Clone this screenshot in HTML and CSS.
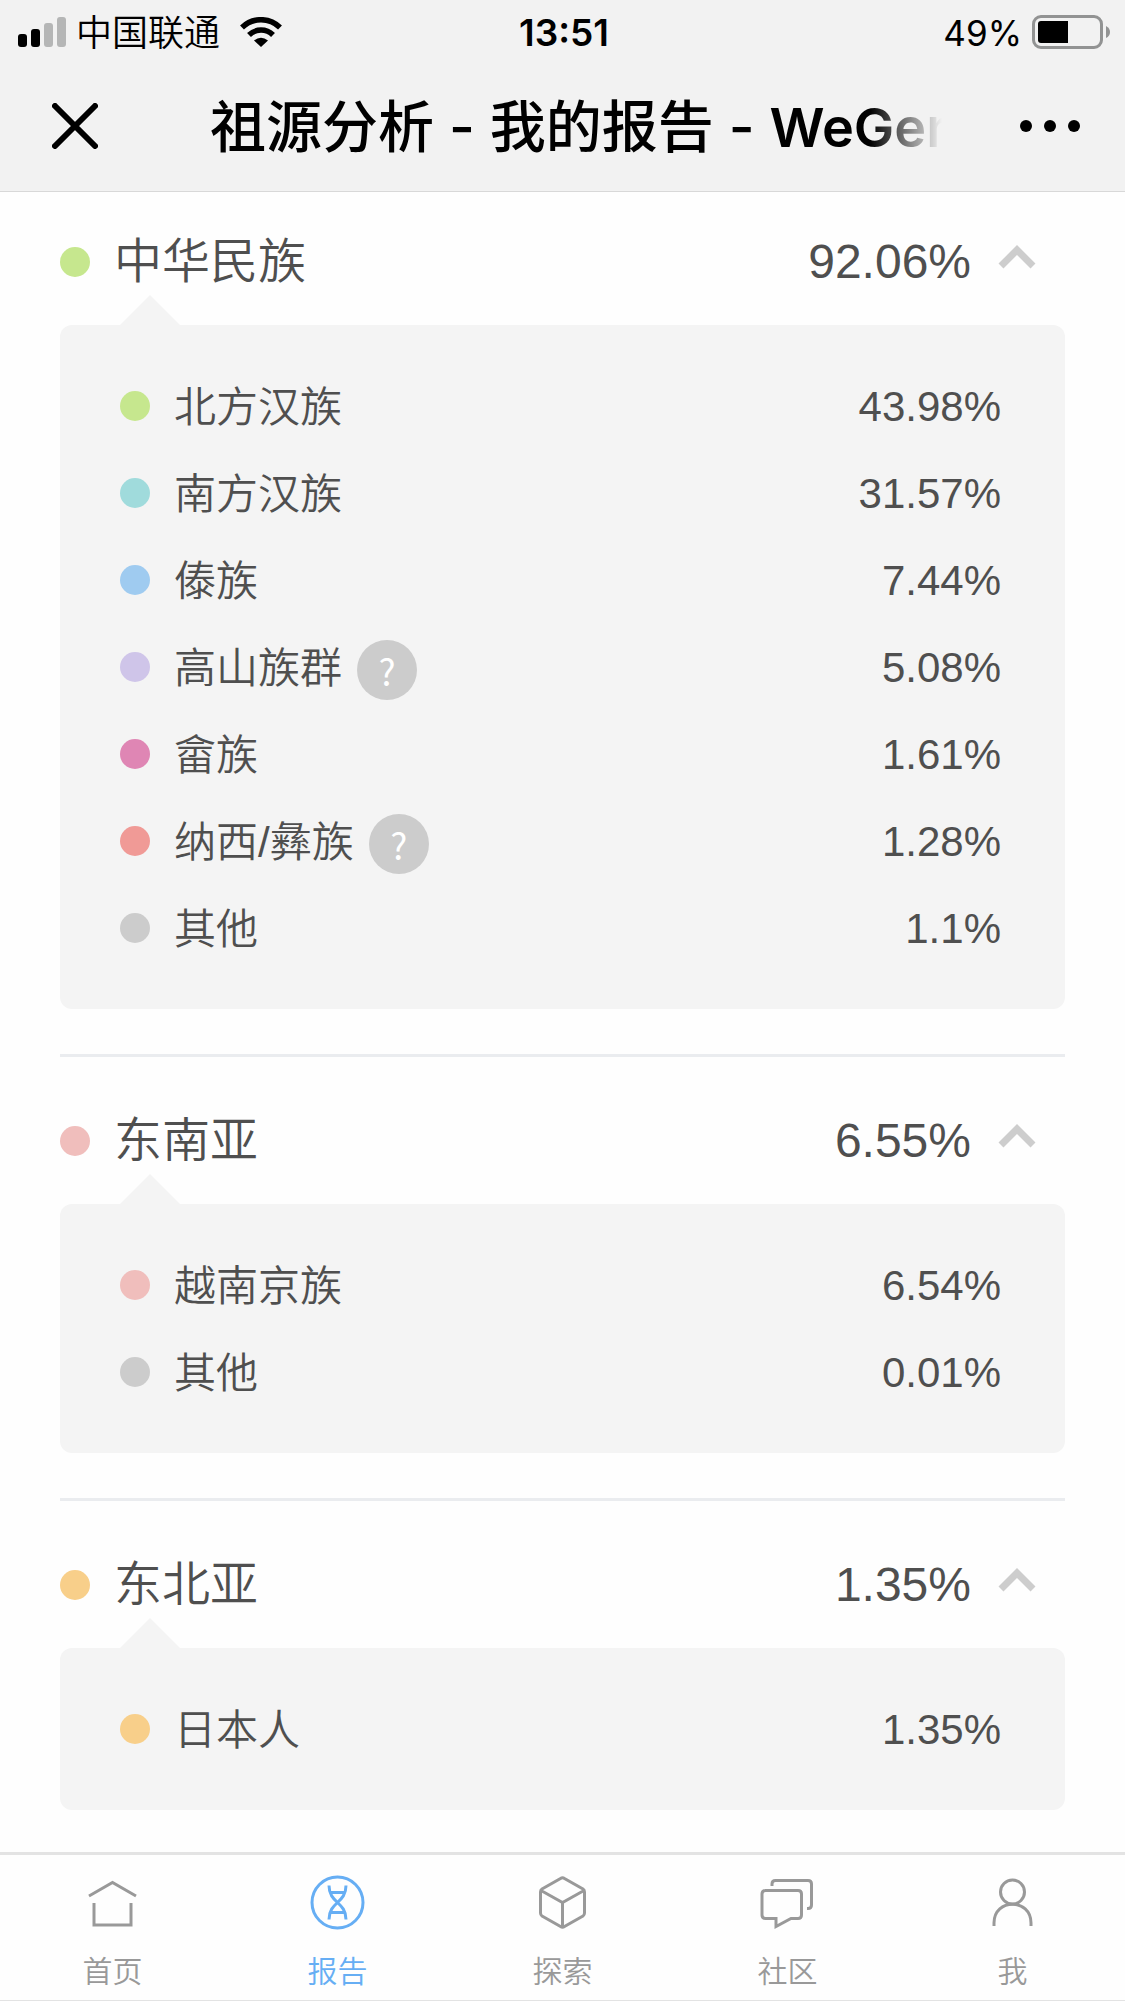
FILE: index.html
```html
<!DOCTYPE html>
<html lang="zh-CN">
<head>
<meta charset="utf-8">
<meta name="viewport" content="width=device-width, initial-scale=1">
<title>祖源分析 - 我的报告 - WeGene</title>
<link rel="stylesheet" href="styles.css">
</head>
<body>
<header class="top">
  <div class="status">
    <div class="status-left">
      <svg class="signal" width="48" height="30" viewBox="0 0 48 30" aria-hidden="true">
        <rect x="0" y="17" width="9" height="13" rx="3"/>
        <rect x="13" y="12" width="9" height="18" rx="3"/>
        <rect class="dim" x="26" y="6" width="9" height="24" rx="3"/>
        <rect class="dim" x="39" y="0" width="9" height="30" rx="3"/>
      </svg>
      <span class="carrier">中国联通</span>
      <svg class="wifi" width="42" height="30" viewBox="0 0 42 30" aria-hidden="true">
        <path d="M2 10.500A27 27 0 0 1 40 10.500M9 18A17 17 0 0 1 33 18" fill="none" stroke="#000" stroke-width="5.500"/>
        <path d="M21 30L14 23.500Q21 18 28 23.500Z"/>
      </svg>
    </div>
    <time class="clock">13:51</time>
    <div class="status-right">
      <span class="charge">49%</span>
      <svg class="battery" width="78" height="34" viewBox="0 0 78 34" aria-hidden="true">
        <rect x="1.500" y="1.500" width="68" height="31" rx="7.500" fill="none" stroke="#929393" stroke-width="3"/>
        <path d="M9 6H36V28H9Q6 28 6 25V9Q6 6 9 6Z"/>
        <path d="M74 11Q78 13 78 17T74 23Z" fill="#929393"/>
      </svg>
    </div>
  </div>
  <div class="nav">
    <button class="icon-btn" type="button" aria-label="关闭">
      <svg width="46" height="46" viewBox="0 0 46 46"><path d="M3 3L43 43M43 3L3 43" stroke="#000" stroke-width="6" stroke-linecap="round"/></svg>
    </button>
    <h1 class="title">祖源分析 - 我的报告 - <span class="brand">WeGene</span></h1>
    <button class="icon-btn" type="button" aria-label="更多">
      <svg width="60" height="12" viewBox="0 0 60 12"><circle cx="6" cy="6" r="6"/><circle cx="30" cy="6" r="6"/><circle cx="54" cy="6" r="6"/></svg>
    </button>
  </div>
</header>

<main class="report">
  <section class="group">
    <button class="group-head" type="button" aria-expanded="true">
      <span class="dot green"></span><span class="name">中华民族</span><span class="value">92.06%</span>
      <svg class="chevron" width="38" height="24" viewBox="0 0 38 24"><path d="M3 21L19 5L35 21"/></svg>
    </button>
    <ul class="card">
      <li class="row"><span class="dot green"></span><span class="name">北方汉族</span><span class="value">43.98%</span></li>
      <li class="row"><span class="dot teal"></span><span class="name">南方汉族</span><span class="value">31.57%</span></li>
      <li class="row"><span class="dot blue"></span><span class="name">傣族</span><span class="value">7.44%</span></li>
      <li class="row"><span class="dot lilac"></span><span class="name">高山族群</span><button class="help" type="button" aria-label="高山族群说明">?</button><span class="value">5.08%</span></li>
      <li class="row"><span class="dot pink"></span><span class="name">畲族</span><span class="value">1.61%</span></li>
      <li class="row"><span class="dot coral"></span><span class="name">纳西/彝族</span><button class="help" type="button" aria-label="纳西/彝族说明">?</button><span class="value">1.28%</span></li>
      <li class="row"><span class="dot gray"></span><span class="name">其他</span><span class="value">1.1%</span></li>
    </ul>
  </section>

  <section class="group">
    <button class="group-head" type="button" aria-expanded="true">
      <span class="dot rose"></span><span class="name">东南亚</span><span class="value">6.55%</span>
      <svg class="chevron" width="38" height="24" viewBox="0 0 38 24"><path d="M3 21L19 5L35 21"/></svg>
    </button>
    <ul class="card">
      <li class="row"><span class="dot rose"></span><span class="name">越南京族</span><span class="value">6.54%</span></li>
      <li class="row"><span class="dot gray"></span><span class="name">其他</span><span class="value">0.01%</span></li>
    </ul>
  </section>

  <section class="group">
    <button class="group-head" type="button" aria-expanded="true">
      <span class="dot amber"></span><span class="name">东北亚</span><span class="value">1.35%</span>
      <svg class="chevron" width="38" height="24" viewBox="0 0 38 24"><path d="M3 21L19 5L35 21"/></svg>
    </button>
    <ul class="card">
      <li class="row"><span class="dot amber"></span><span class="name">日本人</span><span class="value">1.35%</span></li>
    </ul>
  </section>
</main>

<nav class="tabs">
  <a class="tab" href="#home">
    <svg class="tab-icon" width="60" height="60" viewBox="0 0 60 60"><path d="M6 24L29.500 10.500L53 24M11 31V53H48V31"/></svg>
    <span>首页</span>
  </a>
  <a class="tab active" href="#report" aria-current="page">
    <svg class="tab-icon" width="60" height="60" viewBox="0 0 60 60"><circle cx="29.500" cy="30.500" r="25.500"/><path d="M21 13.500C21 31.500 38 29.500 38 47.500M38 13.500C38 31.500 21 29.500 21 47.500M23 20.500H36M23 40.500H36"/></svg>
    <span>报告</span>
  </a>
  <a class="tab" href="#explore">
    <svg class="tab-icon" width="60" height="60" viewBox="0 0 60 60"><path d="M27.500 6.500Q29.500 5 31.500 6.500L50 17Q51.500 18 51.500 20V41Q51.500 43 50 44L31.500 54.500Q29.500 56 27.500 54.500L9 44Q7.500 43 7.500 41V20Q7.500 18 9 17ZM8 18.500L29.500 30.500L51 18.500M29.500 30.500V55"/></svg>
    <span>探索</span>
  </a>
  <a class="tab" href="#community">
    <svg class="tab-icon" width="60" height="60" viewBox="0 0 60 60"><path d="M7 18.500H40Q43.500 18.500 43.500 22V43Q43.500 46.500 40 46.500H33L18 54.500V46.500H7.500Q4 46.500 4 43V22Q4 18.500 7.500 18.500M14 14V12Q14 8.500 17.500 8.500H50Q53.500 8.500 53.500 12V33Q53.500 36.500 50 36.500H49"/></svg>
    <span>社区</span>
  </a>
  <a class="tab" href="#me">
    <svg class="tab-icon" width="60" height="60" viewBox="0 0 60 60"><circle cx="29.500" cy="20" r="12"/><path d="M11 54V51C11 26 48 26 48 51V54"/></svg>
    <span>我</span>
  </a>
</nav>
</body>
</html>
```

FILE: styles.css
```css
* { box-sizing: border-box; }

body {
  margin: 0;
  min-height: 100vh;
  display: flex;
  flex-direction: column;
  background: #fefefe;
  color: #4f4f4f;
  font-family: "Liberation Sans", "Noto Sans CJK SC", sans-serif;
}

button {
  border: 0;
  padding: 0;
  background: none;
  color: inherit;
  font: inherit;
}

/* Status bar and title bar */
.top {
  height: 192px;
  background: #f2f2f2;
  border-bottom: 1px solid #d8d8d8;
  color: #000;
  font-family: Inter, "Noto Sans CJK SC", sans-serif;
}

.status {
  height: 60px;
  padding: 0 15px 0 18px;
  display: grid;
  grid-template-columns: 1fr auto 1fr;
  align-items: center;
  font-size: 36px;
  line-height: 60px;
}

.status-left,
.status-right {
  display: flex;
  align-items: center;
}

.status-right {
  justify-content: flex-end;
  gap: 10px;
}

.dim { fill: #b5b6b6; }

.carrier {
  margin-left: 10px;
  padding-top: 3px;
  font-weight: 350;
}

.wifi { margin-left: 20px; }

.clock {
  padding-top: 2px;
  font-size: 37px;
  font-weight: 600;
}

.charge {
  padding-top: 2px;
  font-size: 35px;
}

.nav {
  height: 131px;
  padding: 0 45px 0 52px;
  display: flex;
  align-items: center;
}

.icon-btn {
  display: flex;
  flex: none;
}

.title {
  flex: 1;
  margin: 0 78px 0 112px;
  padding-top: 3px;
  overflow: hidden;
  white-space: nowrap;
  font-size: 56px;
  line-height: 80px;
  font-weight: 500;
  -webkit-mask-image: linear-gradient(to right, #000 calc(100% - 72px), transparent);
  mask-image: linear-gradient(to right, #000 calc(100% - 72px), transparent);
}

.brand {
  font-size: 54px;
  font-weight: 600;
}

/* Report groups */
.report {
  flex: 1;
  padding: 7px 60px 42px;
}

.group + .group {
  margin-top: 45px;
  padding-top: 21px;
  border-top: 3px solid #eaecef;
}

.group-head {
  width: 100%;
  height: 126px;
  padding-right: 29px;
  display: flex;
  align-items: center;
  font-size: 48px;
  line-height: 72px;
  text-align: left;
}

.dot {
  flex: none;
  width: 30px;
  height: 30px;
  margin-right: 24px;
  border-radius: 50%;
}

.green { background: #c6e78e; }
.teal { background: #a0dbdc; }
.blue { background: #9fcbf0; }
.lilac { background: #cfc5e9; }
.pink { background: #df86b4; }
.coral { background: #f09a96; }
.gray { background: #cccccc; }
.rose { background: #f0bebc; }
.amber { background: #f8cf8a; }

.name { font-weight: 350; }
.value { margin-left: auto; }

.chevron {
  margin: 0 0 10px 27px;
  fill: none;
  stroke: #cdcdcd;
  stroke-width: 7;
}

.card {
  position: relative;
  margin: 0;
  padding: 37px 64px 38px 60px;
  border-radius: 12px;
  background: #f4f4f4;
  list-style: none;
  font-size: 42px;
  line-height: 60px;
}

.card::before {
  content: "";
  position: absolute;
  left: 60px;
  bottom: 100%;
  border: solid transparent;
  border-width: 0 30px 30px;
  border-bottom-color: #f4f4f4;
}

.row {
  height: 87px;
  display: flex;
  align-items: center;
}

.row .name { padding-top: 4px; }
.row .value { padding-top: 2px; }

.help {
  width: 60px;
  height: 60px;
  margin: 6px 0 0 15px;
  border-radius: 50%;
  background: #cccccc;
  color: #fff;
  font-family: "Noto Sans CJK SC", sans-serif;
  font-size: 36px;
  line-height: 56px;
}

/* Bottom tab bar */
.tabs {
  position: sticky;
  bottom: 0;
  height: 150px;
  display: flex;
  background: #fefefe;
  border-top: 3px solid #e3e3e3;
  border-bottom: 2px solid #e3e3e3;
}

.tab {
  flex: 1;
  padding-top: 17px;
  display: flex;
  flex-direction: column;
  align-items: center;
  gap: 20px;
  color: #999;
  font-size: 30px;
  line-height: 40px;
  font-weight: 350;
  text-decoration: none;
}

.active { color: #66aef4; }

.tab-icon {
  fill: none;
  stroke: currentColor;
  stroke-width: 3;
}
```
